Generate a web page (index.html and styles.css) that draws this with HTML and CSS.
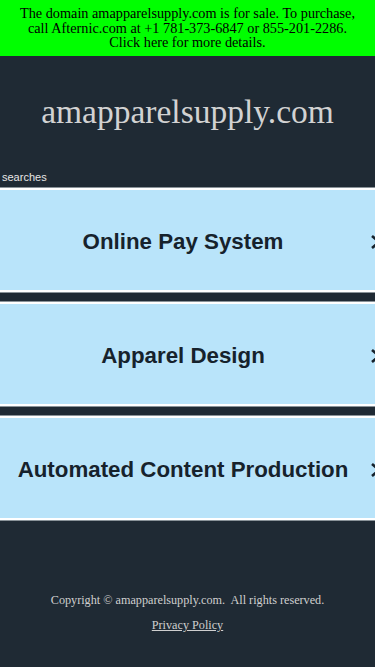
FILE: index.html
```html
<!DOCTYPE html>
<html lang="en">
<head>
    <meta charset="UTF-8">
    <meta name="viewport" content="width=device-width, initial-scale=1.0">
    <title>amapparelsupply.com</title>
    <link rel="stylesheet" href="styles.css">
</head>
<body>
    <!-- Sale banner -->
    <a class="sale-banner" href="#">
        The domain amapparelsupply.com is for sale. To purchase, call Afternic.com at +1 781-373-6847 or 855-201-2286. Click here for more details.
    </a>

    <header class="site-header">
        <h1>amapparelsupply.com</h1>
    </header>

    <div class="searches-label">searches</div>

    <!-- Search links -->
    <div class="search-list">
        <a class="search-card" href="#">
            <span class="search-text">Online Pay System</span>
            <svg class="chevron" width="12" height="16" viewBox="0 0 12 16"><polyline points="2,2 9,8 2,14" fill="none" stroke="#16222c" stroke-width="2.6"/></svg>
        </a>
        <a class="search-card" href="#">
            <span class="search-text">Apparel Design</span>
            <svg class="chevron" width="12" height="16" viewBox="0 0 12 16"><polyline points="2,2 9,8 2,14" fill="none" stroke="#16222c" stroke-width="2.6"/></svg>
        </a>
        <a class="search-card" href="#">
            <span class="search-text">Automated Content Production</span>
            <svg class="chevron" width="12" height="16" viewBox="0 0 12 16"><polyline points="2,2 9,8 2,14" fill="none" stroke="#16222c" stroke-width="2.6"/></svg>
        </a>
    </div>

    <footer class="site-footer">
        <p>Copyright &copy; amapparelsupply.com.&nbsp; All rights reserved.</p>
        <a href="#">Privacy Policy</a>
    </footer>
</body>
</html>
```

FILE: styles.css
```css
/* General Styles */
html {
    overflow-x: hidden;
}

body {
    margin: 0;
    padding: 0;
    background-color: #1f2a34;
    font-family: "Liberation Serif", "Times New Roman", serif;
    min-height: 667px;
}

a {
    text-decoration: none;
}

/* Sale banner */
.sale-banner {
    display: block;
    background-color: #00ff00;
    color: #000;
    text-align: center;
    font-size: 14.25px;
    line-height: 14.5px;
    padding: 6px 20px 6px;
    height: 44px;
}

/* Header */
.site-header {
    padding: 35px 0 0;
    height: 116px;
    box-sizing: border-box;
}

.site-header h1 {
    margin: 0;
    text-align: center;
    color: #d2d2d2;
    font-weight: normal;
    font-size: 33.5px;
    line-height: 42px;
}

.searches-label {
    font-family: "Liberation Sans", Arial, sans-serif;
    font-size: 11px;
    color: #e6e6e6;
    padding-left: 2px;
    height: 11px;
    line-height: 11px;
}

/* Search cards */
.search-list {
    margin-top: 5px;
    display: flex;
    flex-direction: column;
    gap: 10px;
}

.search-card {
    display: flex;
    align-items: center;
    height: 100px;
    background-color: #b9e4fa;
    border-top: 2px solid #fff;
    border-bottom: 2px solid #fff;
    box-shadow: 0 1px 0 #8a9399, 0 -1px 0 #8a9399;
}

.search-text {
    flex: 1;
    text-align: center;
    font-family: "Liberation Sans", Arial, sans-serif;
    font-weight: bold;
    font-size: 22.3px;
    color: #16222c;
    padding: 3px 4px 0 0;
}

.chevron {
    flex-shrink: 0;
    margin: 3px -7px 0 0;
}

/* Footer */
.site-footer {
    text-align: center;
    color: #cfcfcf;
    font-size: 12.2px;
    padding-top: 73px;
}

.site-footer p {
    margin: 0 0 10px;
}

.site-footer a {
    color: #cfcfcf;
    text-decoration: underline;
}
```
